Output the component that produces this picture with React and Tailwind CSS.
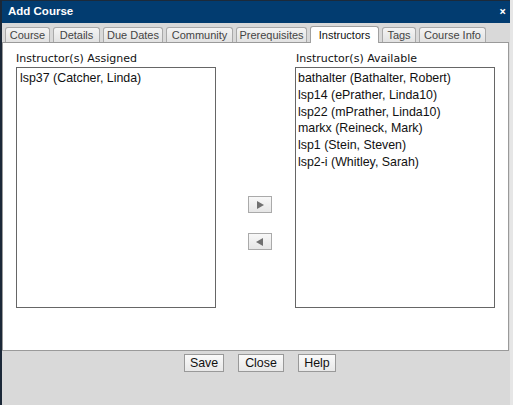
export default function App() {
  const tabs = [
    ["Course", 45],
    ["Details", 47],
    ["Due Dates", 60],
    ["Community", 67],
    ["Prerequisites", 71],
    ["Instructors", 69],
    ["Tags", 34],
    ["Course Info", 67],
  ];
  const avail = [
    "bathalter (Bathalter, Robert)",
    "lsp14 (ePrather, Linda10)",
    "lsp22 (mPrather, Linda10)",
    "markx (Reineck, Mark)",
    "lsp1 (Stein, Steven)",
    "lsp2-i (Whitley, Sarah)",
  ];
  const tabFont = { fontFamily: "'Liberation Sans', Arial, sans-serif", fontSize: "11px" };
  return (
    <div className="w-[513px] h-[405px] bg-[#d9d9d9] flex flex-col border-l-2 border-l-[#1b2838] border-r-[3px] border-r-[#e6e6e6] overflow-hidden">
      <div className="h-[23px] bg-[#023c70] border-t border-t-[#1c2a3a] flex items-center justify-between pl-[6px] pr-[4px] shrink-0">
        <span className="text-white font-bold text-[11.5px]" style={{ fontFamily: "'Liberation Sans', Arial, sans-serif" }}>Add Course</span>
        <span className="text-white font-bold text-[12px] leading-none">×</span>
      </div>
      <div className="flex items-end gap-[3px] pl-[3px] h-[19px] shrink-0">
        {tabs.map(([t, w]) => {
          const active = t === "Instructors";
          return (
            <div
              key={t}
              className={
                active
                  ? "h-[17px] bg-white border border-[#a0a0a0] border-b-0 rounded-t-[3px] text-[#111] flex items-center justify-center whitespace-nowrap relative top-[1px]"
                  : "h-[15px] bg-gradient-to-b from-[#f4f4f4] to-[#e2e2e2] border border-[#a9a9a9] border-b-0 rounded-t-[3px] text-[#444] flex items-center justify-center whitespace-nowrap"
              }
              style={{ ...tabFont, width: w + "px" }}
            >
              {t}
            </div>
          );
        })}
      </div>
      <div className="h-[309px] mr-[1px] bg-white border border-[#9a9a9a] flex pl-[13px] pt-[8px] shrink-0">
        <div className="flex flex-col w-[200px]">
          <div className="h-[16px] text-[#111] leading-[16px]" style={{ fontFamily: "'DejaVu Sans', sans-serif", fontSize: "11px" }}>Instructor(s) Assigned</div>
          <div className="h-[241px] border border-[#666] px-[3px] pt-[2px] leading-[17px] text-[#111]" style={{ fontFamily: "'Liberation Sans', Arial, sans-serif", fontSize: "12.4px" }}>
            lsp37 (Catcher, Linda)
          </div>
        </div>
        <div className="flex flex-col items-start w-[79px] pl-[32px] pt-[145px] gap-[20px]">
          <button className="w-[24px] h-[17px] border border-[#aaa] bg-gradient-to-b from-[#f8f8f8] to-[#e6e6e6] flex items-center justify-center">
            <svg width="8" height="8" viewBox="0 0 8 8"><polygon points="1,0 8,4 1,8" fill="#707070" /></svg>
          </button>
          <button className="w-[24px] h-[17px] border border-[#aaa] bg-gradient-to-b from-[#f8f8f8] to-[#e6e6e6] flex items-center justify-center">
            <svg width="8" height="8" viewBox="0 0 8 8"><polygon points="7,0 0,4 7,8" fill="#707070" /></svg>
          </button>
        </div>
        <div className="flex flex-col w-[200px]">
          <div className="h-[16px] text-[#111] leading-[16px] pl-[1px]" style={{ fontFamily: "'DejaVu Sans', sans-serif", fontSize: "11px" }}>Instructor(s) Available</div>
          <div className="h-[241px] border border-[#666] px-[2px] pt-[2px] leading-[16.8px] text-[#111]" style={{ fontFamily: "'Liberation Sans', Arial, sans-serif", fontSize: "12.4px" }}>
            {avail.map((a) => (
              <div key={a}>{a}</div>
            ))}
          </div>
        </div>
      </div>
      <div className="flex gap-[14px] pt-[3px] pl-[182px]" style={{ fontFamily: "'Liberation Sans', Arial, sans-serif" }}>
        <button className="w-[40px] h-[18px] border border-[#999] bg-gradient-to-b from-[#fafafa] to-[#e8e8e8] text-[12.4px] text-[#111] leading-none">Save</button>
        <button className="w-[46px] h-[18px] border border-[#999] bg-gradient-to-b from-[#fafafa] to-[#e8e8e8] text-[12.4px] text-[#111] leading-none">Close</button>
        <button className="w-[38px] h-[18px] border border-[#999] bg-gradient-to-b from-[#fafafa] to-[#e8e8e8] text-[12.4px] text-[#111] leading-none">Help</button>
      </div>
    </div>
  );
}
